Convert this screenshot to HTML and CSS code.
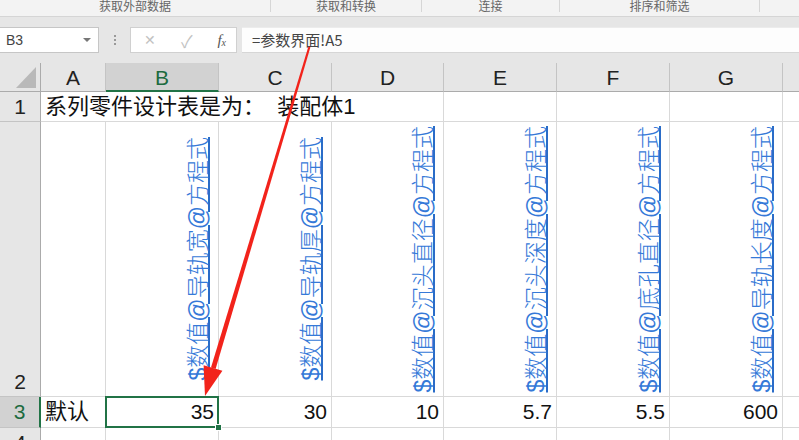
FILE: index.html
```html
<!DOCTYPE html>
<html>
	<head>
		<meta charset="utf-8" />
		<title>Excel</title>
		<link rel="stylesheet" href="styles.css">
	</head>
	<body>
		<div class="ribbon">
			<div class="group g1"><span>获取外部数据</span></div>
			<div class="group g2"><span>获取和转换</span></div>
			<div class="group g3"><span>连接</span></div>
			<div class="group g4"><span>排序和筛选</span></div>
			<div class="group g5"></div>
		</div>
		<div class="fbar">
			<div class="namebox">
				<span>B3</span>
				<i class="drop"></i>
			</div>
			<div class="dots"><b></b><b></b><b></b></div>
			<div class="btns">
				<span class="x">✕</span>
				<span class="ok">✓</span>
				<span class="fx">f<sub>x</sub></span>
			</div>
			<div class="input">=参数界面!A5</div>
		</div>

		<div class="sheet">
			<!-- 列标 -->
			<div class="corner"><i></i></div>
			<div class="hd">A</div>
			<div class="hd on">B</div>
			<div class="hd">C</div>
			<div class="hd">D</div>
			<div class="hd">E</div>
			<div class="hd">F</div>
			<div class="hd">G</div>
			<div class="hd last"></div>

			<!-- 第1行 -->
			<div class="rh">1</div>
			<div class="c title">系列零件设计表是为：  装配体1</div>
			<div class="c"></div>
			<div class="c"></div>
			<div class="c"></div>
			<div class="c last"></div>

			<!-- 第2行 -->
			<div class="rh tall">2</div>
			<div class="c"></div>
			<div class="c vt"><span>$数值@导轨宽@方程式</span></div>
			<div class="c vt"><span>$数值@导轨厚@方程式</span></div>
			<div class="c vt"><span>$数值@沉头直径@方程式</span></div>
			<div class="c vt"><span>$数值@沉头深度@方程式</span></div>
			<div class="c vt"><span>$数值@底孔直径@方程式</span></div>
			<div class="c vt"><span>$数值@导轨长度@方程式</span></div>
			<div class="c last"></div>

			<!-- 第3行 -->
			<div class="rh on">3</div>
			<div class="c txt">默认</div>
			<div class="c num sel">35<i class="handle"></i></div>
			<div class="c num">30</div>
			<div class="c num">10</div>
			<div class="c num">5.7</div>
			<div class="c num">5.5</div>
			<div class="c num">600</div>
			<div class="c last"></div>

			<!-- 第4行 -->
			<div class="rh">4</div>
			<div class="c"></div>
			<div class="c"></div>
			<div class="c"></div>
			<div class="c"></div>
			<div class="c"></div>
			<div class="c"></div>
			<div class="c"></div>
			<div class="c last"></div>
		</div>

		<svg class="arrow" width="799" height="440" viewBox="0 0 799 440">
			<polygon points="308.4,46.6 310.4,47.2 215.6,369.0 211.0,367.6" fill="#f2231b"/>
			<polygon points="205,396 203.6,365.2 222.4,370.8" fill="#f2231b"/>
		</svg>
	</body>
</html>
```

FILE: styles.css
```css
body{margin:0;padding:0;width:799px;height:440px;overflow:hidden;background:#e6e6e6;font-family:"Liberation Sans","Noto Sans CJK SC",sans-serif;position:relative;}

/* 功能区底部的组名 */
.ribbon{display:flex;height:16px;background:#f3f3f3;border-bottom:1px solid #d5d5d5;}
.group{height:12px;border-right:1px solid #d6d6d6;text-align:center;font-family:"Noto Sans CJK SC",sans-serif;font-size:12px;line-height:11px;color:#666;overflow:hidden;}
.group span{display:block;}
.g1{width:270px;}
.g2{width:150px;}
.g3{width:137px;}
.g4{width:199px;}
.g5{flex:1;border-right:none;}

/* 编辑栏 */
.fbar{display:flex;align-items:stretch;height:26px;margin-top:10px;}
.namebox{width:99px;background:#fff;border:1px solid #c6c6c6;border-left:none;box-sizing:border-box;display:flex;align-items:center;justify-content:space-between;padding:0 7px 0 6px;font-size:14px;color:#444;}
.drop{width:0;height:0;border-left:4px solid transparent;border-right:4px solid transparent;border-top:4px solid #777;}
.dots{width:31px;display:flex;flex-direction:column;align-items:center;justify-content:center;gap:2px;}
.dots b{width:2px;height:2px;background:#999;}
.btns{width:107px;background:#fff;border:1px solid #d0d0d0;box-sizing:border-box;display:flex;align-items:center;justify-content:space-between;padding:0 10px 0 13px;}
.btns .x{color:#c2c2c2;font-size:14px;}
.btns .ok{color:#c2c2c2;font-size:17px;}
.btns .fx{font-family:"Liberation Serif",serif;font-style:italic;font-size:15px;color:#555;}
.btns .fx sub{font-size:10px;vertical-align:-1px;}
.input{flex:1;margin-left:5px;background:#fdfdfd;border-top:1px solid #ececec;border-bottom:1px solid #d6d6d6;box-sizing:border-box;padding-left:10px;font-family:"Noto Sans CJK SC",sans-serif;font-size:15px;line-height:23px;color:#444;}

/* 工作表 */
.sheet{display:grid;margin-top:10px;grid-template-columns:41px 65px 113px 113px 112px 113px 113px 113px 1fr;grid-template-rows:29px 30px 275px 31px 1fr;height:377px;}
.sheet > div{box-sizing:border-box;}
.corner{border-right:1px solid #ababab;border-bottom:1px solid #ababab;position:relative;}
.corner i{position:absolute;right:4px;bottom:3px;width:0;height:0;border-left:20px solid transparent;border-bottom:21px solid #b9b9b9;}
.hd{border-right:1px solid #c4c4c4;border-bottom:1px solid #ababab;text-align:center;font-size:21px;line-height:30px;color:#222;}
.hd.on{background:#d2d2d2;border-bottom:2px solid #217346;color:#1d6b3f;}
.hd.last{border-right:none;}
.rh{border-right:1px solid #ababab;border-bottom:1px solid #c4c4c4;text-align:center;font-size:21px;line-height:30px;color:#222;}
.rh.tall{display:flex;align-items:flex-end;justify-content:center;line-height:28px;}
.rh.on{background:#d2d2d2;border-right:2px solid #217346;color:#1d6b3f;}

.c{background:#fff;border-right:1px solid #d9d9d9;border-bottom:1px solid #d9d9d9;}
.c.last{border-right:none;}
.title{grid-column:span 4;font-size:22px;line-height:29px;padding-left:4px;color:#111;white-space:pre;}
.txt{font-size:22px;line-height:29px;padding-left:4px;color:#111;}
.num{text-align:right;font-size:21px;line-height:30px;padding-right:4px;color:#111;}

/* 竖排的链接文字，垂直居中 */
.vt{display:flex;justify-content:flex-end;align-items:center;padding:0 9px 0 0;}
.vt span{writing-mode:vertical-rl;text-orientation:sideways;transform:rotate(180deg);font-size:23px;font-weight:300;line-height:22px;color:#3579d8;text-decoration:underline;text-decoration-color:#2a6cc8;white-space:nowrap;}

/* 选中的单元格 */
.sel{position:relative;}
.sel::before{content:"";position:absolute;left:-1px;top:-1px;right:-1px;bottom:-1px;border:2px solid #217346;}
.handle{position:absolute;right:-4px;bottom:-4px;width:5px;height:5px;background:#217346;border:1px solid #fff;}

.arrow{position:absolute;left:0;top:0;pointer-events:none;}
```
